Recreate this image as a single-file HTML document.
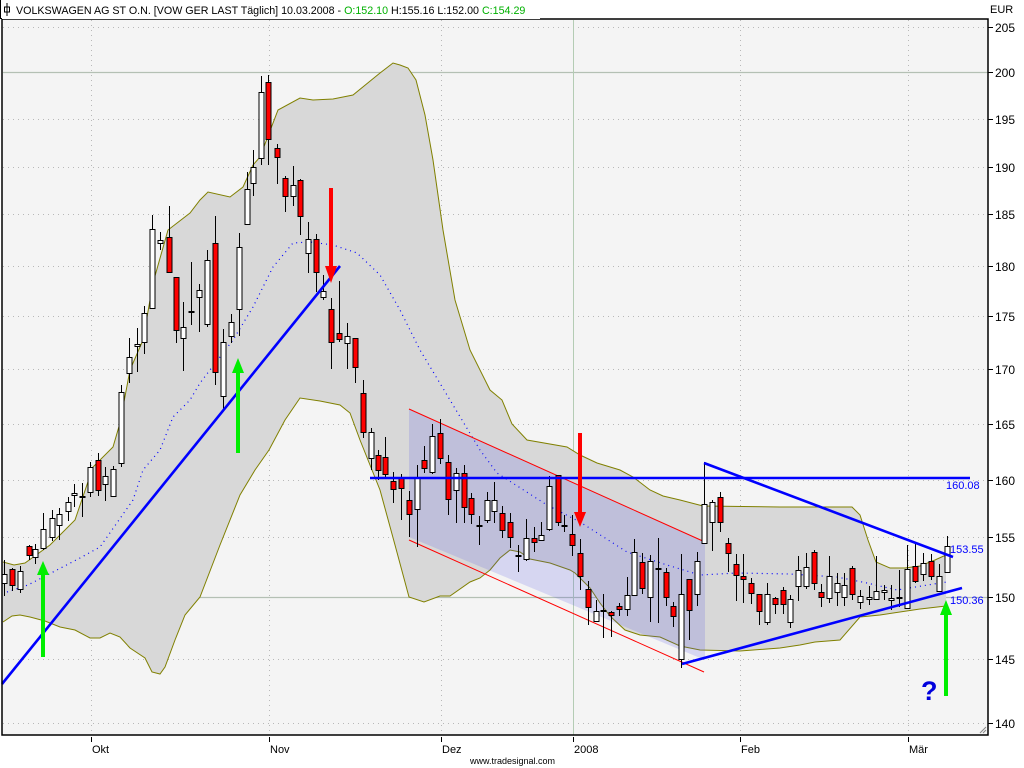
<!DOCTYPE html>
<html><head><meta charset="utf-8">
<style>
html,body{margin:0;padding:0;background:#fff;width:1024px;height:768px;overflow:hidden}
svg{display:block}
text{font-family:"Liberation Sans",sans-serif}
</style></head><body>
<svg id="s" width="1024" height="768" viewBox="0 0 1024 768" xmlns="http://www.w3.org/2000/svg">
<rect x="0" y="0" width="1024" height="768" fill="#fff"/>
<rect x="2" y="19" width="986" height="716" fill="#f4f4f4"/>
<g id="grid"></g>
<polygon id="band" fill="#d8d8d8" stroke="none"/>
<polyline id="up" fill="none" stroke="#808000" stroke-width="1"/>
<polyline id="lo" fill="none" stroke="#808000" stroke-width="1"/>
<polyline id="mid" fill="none" stroke="#0000ff" stroke-width="1.2" stroke-dasharray="1 4"/>
<polygon points="409,409 705,542 705,660 409,537" fill="rgba(80,80,230,0.18)"/>
<line x1="409" y1="409" x2="705" y2="542" stroke="#ff0000" stroke-width="1"/>
<line x1="409" y1="540" x2="704" y2="672" stroke="#ff0000" stroke-width="1"/>
<g id="candles"></g>
<g stroke="#0000ff" stroke-width="2.6" fill="none">
<line x1="2" y1="684" x2="340" y2="266"/>
<line x1="370" y1="478" x2="970" y2="478"/>
<line x1="704" y1="463" x2="953" y2="557"/>
<line x1="682" y1="664" x2="962" y2="588"/>
</g>
<g fill="#ff0000">
<rect x="329" y="188" width="4" height="80"/><polygon points="325,266 337,266 331,283"/>
<rect x="578" y="433" width="4" height="82"/><polygon points="574,512 586,512 580,527"/>
</g>
<g fill="#00ee00">
<rect x="41" y="572" width="4" height="85"/><polygon points="37,575 49,575 43,561"/>
<rect x="236" y="370" width="4" height="83"/><polygon points="232,373 244,373 238,358"/>
<rect x="944" y="612" width="4" height="84"/><polygon points="940,615 952,615 946,600"/>
</g>
<text x="921" y="700" font-size="27" font-weight="bold" fill="#0000dd">?</text>
<g font-size="11" fill="#0000ff">
<text x="946" y="489">160.08</text>
<text x="950" y="553">153.55</text>
<text x="950" y="604">150.36</text>
</g>
<rect x="2" y="19" width="986" height="716" fill="none" stroke="#000" stroke-width="1.5"/>
<path d="M980,733 L986,727 M983,733 L986,730" stroke="#888" stroke-width="1"/>
<g id="axis" font-size="12" fill="#000"></g>
<text x="990" y="13" font-size="11">EUR</text>
<rect x="0" y="0" width="540" height="19" fill="#fff"/>
<line x1="0.5" y1="0" x2="0.5" y2="19" stroke="#000"/>
<line x1="0" y1="18.5" x2="2" y2="18.5" stroke="#000"/>
<path d="M7,3 V16 M4.5,7 h5 v5 h-5 z" stroke="#000" stroke-width="1" fill="none"/>
<text x="16" y="14" font-size="10.7" fill="#000">VOLKSWAGEN AG ST O.N. [VOW GER LAST Täglich] 10.03.2008 - <tspan fill="#00b000">O:152.10</tspan> H:155.16 L:152.00 <tspan fill="#00b000">C:154.29</tspan></text>
<text x="470" y="764" font-size="9" fill="#000">www.tradesignal.com</text>
</svg>
<script>
var NS="http://www.w3.org/2000/svg",s=document.getElementById('s');
function el(t,a,p){var e=document.createElementNS(NS,t);for(var k in a)e.setAttribute(k,a[k]);(p||s).appendChild(e);return e;}
var grid=document.getElementById('grid'),axis=document.getElementById('axis');
var ys=[[205,27],[200,72],[195,119],[190,167],[185,214],[180,266],[175,316],[170,369],[165,424],[160,480],[155,537],[150,597],[145,659],[140,723]];
ys.forEach(function(p){var y=p[1]+0.5;
 if(p[0]==200||p[0]==150)el('line',{x1:3,y1:y,x2:988,y2:y,stroke:'#b4c0b4','stroke-width':1.3},grid);
 else el('line',{x1:3,y1:y,x2:988,y2:y,stroke:'#b8b8b8','stroke-width':1,'stroke-dasharray':'1 4'},grid);
 el('line',{x1:988,y1:y,x2:993,y2:y,stroke:'#000'},axis);
 var t=el('text',{x:995,y:p[1]+5},axis);t.textContent=p[0];});
var xs=[[91,'Okt'],[269,'Nov'],[441,'Dez'],[573,'2008'],[740,'Feb'],[908,'Mär']];
xs.forEach(function(p){var x=p[0]+0.5;
 if(p[1]=='2008')el('line',{x1:x,y1:20,x2:x,y2:735,stroke:'#b4ccb4','stroke-width':1},grid);
 else el('line',{x1:x,y1:20,x2:x,y2:735,stroke:'#b8b8b8','stroke-dasharray':'1 4'},grid);
 el('line',{x1:x,y1:737,x2:x,y2:742,stroke:'#000'},axis);
 var t=el('text',{x:p[0]+1,y:753,'font-size':11},axis);t.textContent=p[1];});
var U=[[3,562],[14,565],[25,563],[50,545],[75,520],[93,467],[113,447],[120,423],[130,370],[143,340],[153,283],[168,230],[190,213],[200,200],[208,192],[230,197],[243,187],[253,165],[260,157],[278,110],[300,98],[313,100],[333,99],[353,95],[380,73],[393,63],[400,65],[408,68],[416,80],[425,115],[433,160],[443,230],[455,300],[470,350],[490,390],[502,400],[512,424],[527,440],[567,447],[580,455],[597,463],[620,470],[633,477],[650,490],[663,496],[680,500],[703,506],[780,507],[852,507],[860,515],[868,540],[876,562],[890,568],[905,568],[920,566],[935,560],[946,555]];
var L=[[3,622],[12,616],[20,615],[30,617],[45,621],[60,627],[75,630],[90,638],[100,638],[110,633],[120,637],[130,648],[145,658],[152,672],[160,674],[165,667],[175,640],[185,615],[200,597],[220,545],[240,495],[255,470],[269,450],[285,420],[300,398],[320,401],[340,405],[350,413],[360,440],[380,490],[395,545],[409,597],[424,602],[440,596],[450,596],[470,582],[480,578],[490,570],[500,558],[510,550],[520,552],[530,559],[550,563],[570,570],[575,573],[590,588],[600,603],[610,616],[625,630],[640,635],[660,637],[680,646],[700,650],[740,651],[780,648],[800,645],[815,642],[840,640],[860,617],[880,615],[920,609],[946,606]];
var M=[[7,592],[28,585],[80,558],[100,547],[133,500],[143,470],[160,450],[173,417],[190,400],[200,383],[233,340],[253,307],[273,267],[293,243],[310,242],[333,245],[357,253],[380,275],[400,310],[420,350],[435,375],[450,400],[480,450],[497,473],[547,505],[580,522],[627,552],[667,565],[700,575],[737,573],[790,574],[837,577],[867,583],[897,590],[940,583],[947,582]];
function pts(a){return a.map(function(p){return p.join(',')}).join(' ');}
document.getElementById('up').setAttribute('points',pts(U));
document.getElementById('lo').setAttribute('points',pts(L));
document.getElementById('mid').setAttribute('points',pts(M));
document.getElementById('band').setAttribute('points',pts(U)+' '+pts(L.slice().reverse()));
var C=[[4,574,583,560,596,0],[12,569,585,568,591,1],[20,571,589,566,593,0],[29,546,555,545,560,1],[35,549,557,544,564,0],[43,529,548,513,550,0],[52,518,537,510,541,0],[59,514,525,508,540,0],[68,502,511,497,521,0],[74,493,495,484,507,0],[82,496,497,483,517,0],[90,467,492,462,497,0],[98,460,490,453,496,1],[105,476,484,467,501,0],[113,469,496,466,497,0],[121,392,463,385,467,0],[129,357,373,338,383,0],[137,344,346,328,372,0],[144,313,342,306,354,0],[152,229,308,215,308,0],[160,240,243,232,250,0],[169,237,272,206,272,1],[176,277,330,277,343,1],[183,327,338,302,371,0],[191,311,312,262,325,0],[199,290,297,284,332,0],[207,260,324,250,327,0],[215,243,372,216,385,1],[223,342,396,329,409,0],[231,322,336,314,343,0],[239,247,309,233,336,0],[247,189,224,172,224,0],[253,167,183,150,196,0],[261,92,158,76,165,0],[268,82,139,75,165,1],[277,148,157,144,184,1],[285,178,196,176,212,1],[293,185,196,166,206,0],[300,180,216,179,235,1],[308,239,253,222,273,0],[316,239,272,234,292,1],[323,291,297,275,300,0],[331,309,342,298,369,1],[339,333,339,281,342,1],[347,336,343,323,369,0],[355,338,367,338,383,1],[363,393,432,380,438,1],[371,432,458,428,470,0],[378,455,470,450,480,1],[385,457,474,437,478,1],[393,481,489,472,503,1],[401,478,488,474,520,1],[409,500,514,491,537,1],[417,478,509,465,547,0],[424,460,468,446,473,1],[432,436,472,424,474,0],[440,433,458,419,464,1],[448,462,499,455,515,1],[456,473,490,468,523,0],[464,473,507,465,523,1],[471,498,514,493,524,1],[479,525,526,516,545,0],[487,500,520,492,523,0],[494,500,511,482,523,0],[502,513,530,506,538,1],[510,522,537,513,548,1],[518,555,556,545,572,0],[526,538,559,519,561,0],[534,538,542,527,552,1],[541,535,540,522,541,0],[549,486,529,476,531,0],[558,475,522,475,526,1],[564,525,526,515,532,0],[572,534,545,515,556,1],[580,553,576,539,590,1],[588,589,607,581,625,1],[596,611,621,600,621,0],[603,610,611,594,638,0],[611,612,615,611,637,1],[619,606,609,603,616,1],[627,595,609,577,616,0],[634,552,595,539,595,0],[642,562,588,553,594,1],[650,561,597,555,622,0],[658,568,569,538,623,0],[666,572,597,568,606,1],[673,606,616,602,627,1],[681,594,659,554,668,0],[689,579,610,579,640,1],[697,561,594,552,606,0],[704,504,543,462,544,0],[712,502,522,500,551,0],[720,497,522,492,532,1],[728,543,553,538,572,1],[736,564,575,554,601,1],[743,576,579,554,603,1],[751,583,593,578,604,1],[759,594,611,594,625,1],[767,594,622,583,625,0],[775,598,604,597,614,1],[783,590,604,587,614,1],[790,599,622,595,628,0],[798,570,586,556,601,0],[806,567,586,553,589,0],[814,552,583,550,590,1],[821,592,597,584,607,1],[829,576,598,556,603,0],[837,583,592,573,606,0],[844,585,597,573,606,0],[852,568,594,566,600,1],[860,596,602,590,609,0],[869,597,599,586,605,0],[876,591,599,556,600,0],[884,590,592,585,600,0],[891,598,600,585,610,0],[899,597,598,570,607,0],[907,569,608,545,609,0],[915,566,581,544,583,1],[923,563,574,553,581,0],[931,561,576,554,580,1],[939,576,591,564,591,0],[947,546,572,536,573,0]];
var cg=document.getElementById('candles');
C.forEach(function(c){var x=c[0]+0.5;
 el('line',{x1:x,y1:c[3],x2:x,y2:c[4],stroke:'#000','stroke-width':1},cg);
 var h=Math.max(c[2]-c[1],1);
 el('rect',{x:c[0]-2,y:c[1]+0.5,width:5,height:h,fill:c[5]?'#ff0000':'#fff',stroke:'#000','stroke-width':1},cg);});
</script>
</body></html>
